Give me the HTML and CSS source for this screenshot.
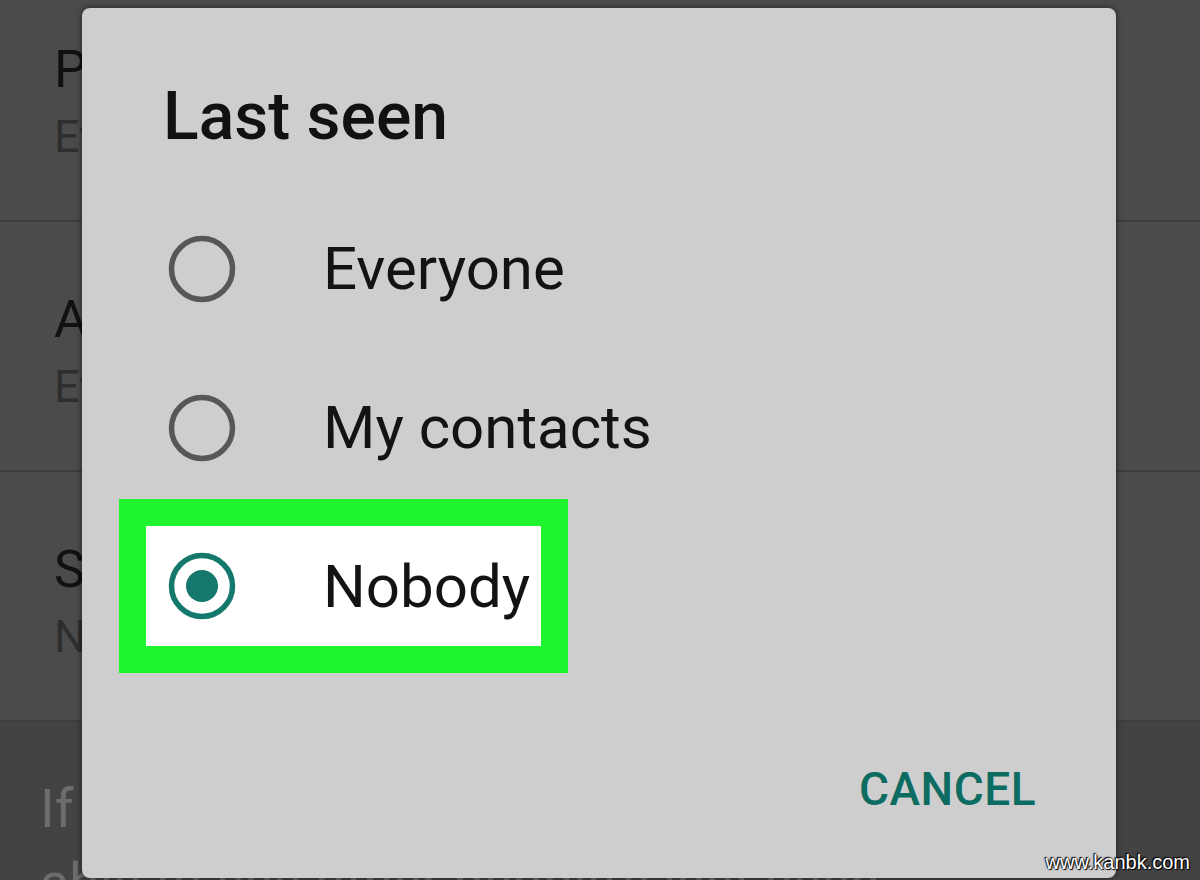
FILE: index.html
```html
<!DOCTYPE html>
<html lang="en">
<head>
<meta charset="utf-8">
<title>Last seen</title>
<link rel="stylesheet" href="styles.css">
</head>
<body>
<div class="screen">
  <div class="settings">
    <div class="setting first">
      <div class="setting-title">Profile photo</div>
      <div class="setting-sub">Everyone</div>
    </div>
    <div class="setting">
      <div class="setting-title">About</div>
      <div class="setting-sub">Everyone</div>
    </div>
    <div class="setting">
      <div class="setting-title">Status</div>
      <div class="setting-sub">Nobody</div>
    </div>
    <div class="note">If you don't share your last seen, you won't be<br>able to see other people's last seen.</div>
  </div>

  <div class="dialog">
    <h1 class="dialog-title">Last seen</h1>
    <div class="options">
      <div class="option">
        <svg class="radio" viewBox="0 0 70 70" width="70" height="70"><circle cx="35" cy="35" r="30.5" fill="none" stroke="#575757" stroke-width="5.5"/></svg>
        <span class="option-label">Everyone</span>
      </div>
      <div class="option">
        <svg class="radio" viewBox="0 0 70 70" width="70" height="70"><circle cx="35" cy="35" r="30.5" fill="none" stroke="#575757" stroke-width="5.5"/></svg>
        <span class="option-label">My contacts</span>
      </div>
      <div class="option selected">
        <svg class="radio" viewBox="0 0 70 70" width="70" height="70"><circle cx="35" cy="35" r="30.5" fill="none" stroke="#15786d" stroke-width="5.5"/><circle cx="35" cy="35" r="16" fill="#15786d"/></svg>
        <span class="option-label">Nobody</span>
      </div>
    </div>
    <div class="actions">
      <span class="btn">CANCEL</span>
    </div>
  </div>

  <div class="watermark">www.kanbk.com</div>
</div>
</body>
</html>
```
FILE: styles.css
```css
html, body {
  margin: 0;
  padding: 0;
}
body {
  background: #4b4b4b;
  font-family: Roboto, "Noto Sans", sans-serif;
  overflow: hidden;
}
.screen {
  position: relative;
  width: 1200px;
  height: 880px;
  overflow: hidden;
  background: #4b4b4b;
}
.settings {
  display: flex;
  flex-direction: column;
  margin-top: -28px;
}
.setting {
  height: 250px;
  box-sizing: border-box;
  padding: 68px 0 0 54px;
  border-bottom: 2px solid #3e3e3e;
}
.setting-title {
  font-size: 52px;
  line-height: 60px;
  color: #111111;
  white-space: nowrap;
}
.setting-sub {
  margin-top: 9px;
  font-size: 45px;
  line-height: 56px;
  color: #2e2e2e;
  white-space: nowrap;
}
.note {
  background: #434343;
  height: 200px;
  box-sizing: border-box;
  padding: 50px 0 0 40px;
  font-size: 54px;
  line-height: 74px;
  color: #6c6c6c;
  white-space: nowrap;
}

.dialog {
  position: absolute;
  left: 82px;
  top: 8px;
  width: 1034px;
  height: 870px;
  box-sizing: border-box;
  background: #cecece;
  border-radius: 8px;
  box-shadow: 0 0 6px rgba(0, 0, 0, 0.55);
  padding: 69px 0 0 0;
}
.dialog-title {
  margin: 0 0 32px 81px;
  font-size: 66px;
  line-height: 80px;
  font-weight: 500;
  color: #111111;
}
.options {
  display: flex;
  flex-direction: column;
}
.option {
  display: flex;
  align-items: center;
  height: 159px;
  padding-left: 85px;
  box-sizing: border-box;
}
.radio {
  flex: none;
  display: block;
}
.option-label {
  margin-left: 86px;
  font-size: 60px;
  color: #131313;
  white-space: nowrap;
}
.option.selected {
  align-self: flex-start;
  width: 449px;
  height: 174px;
  margin: -8px 0 -7px 37px;
  padding-left: 21px;
  border: 27px solid #1ef52f;
  background: #ffffff;
}
.actions {
  display: flex;
  justify-content: flex-end;
  margin-top: 95px;
  padding-right: 80px;
}
.btn {
  font-size: 46px;
  line-height: 56px;
  font-weight: 500;
  letter-spacing: 0.5px;
  color: #0c6c61;
}
.watermark {
  position: absolute;
  right: 10px;
  bottom: 6px;
  font-family: "Liberation Sans", Arial, sans-serif;
  font-size: 20px;
  color: #ffffff;
  text-shadow: 0 0 2px #000, 1px 1px 1px #000, -1px -1px 1px #000;
}
```
